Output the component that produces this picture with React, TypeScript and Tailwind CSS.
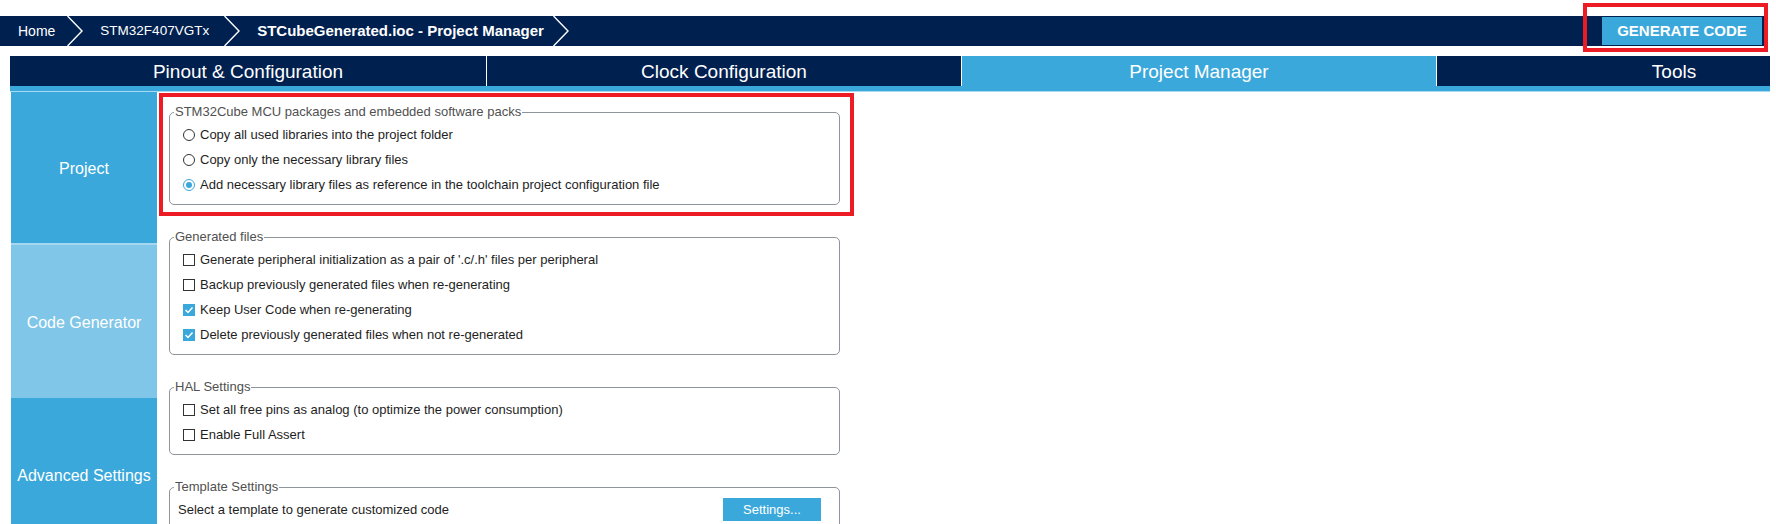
import React from 'react';

const Chevron: React.FC<{ className?: string }> = ({ className }) => (
  <svg className={className} width="16" height="30" viewBox="0 0 16 30" fill="none">
    <polyline points="0.5,0 15,15 0.5,30" stroke="#ffffff" strokeWidth="1.4" />
  </svg>
);

const Radio: React.FC<{ checked?: boolean }> = ({ checked }) =>
  checked ? (
    <span className="flex h-[12px] w-[12px] items-center justify-center rounded-full border border-[#3ba8db] bg-white">
      <span className="h-[6px] w-[6px] rounded-full bg-[#3ba8db]" />
    </span>
  ) : (
    <span className="h-[12px] w-[12px] rounded-full border border-[#333333] bg-white" />
  );

const Checkbox: React.FC<{ checked?: boolean }> = ({ checked }) =>
  checked ? (
    <span className="flex h-[12px] w-[12px] items-center justify-center bg-[#3ba8db]">
      <svg width="12" height="12" viewBox="0 0 12 12" fill="none">
        <polyline points="2.5,6 5,8.5 9.5,3.5" stroke="#ffffff" strokeWidth="1.5" />
      </svg>
    </span>
  ) : (
    <span className="h-[12px] w-[12px] border border-[#333333] bg-white" />
  );

const Option: React.FC<{ kind: 'radio' | 'check'; checked?: boolean; label: string }> = ({
  kind,
  checked,
  label
}) => (
  <label className="flex h-[25px] items-center pl-[13px] text-[13px] text-[#1e1e1e]">
    {kind === 'radio' ? <Radio checked={checked} /> : <Checkbox checked={checked} />}
    <span className="ml-[5px]">{label}</span>
  </label>
);

const Group: React.FC<{ title: string; className?: string; children: React.ReactNode }> = ({
  title,
  className = '',
  children
}) => (
  <fieldset className={`w-[671px] rounded-[5px] border border-[#8e949c] pb-[7px] pt-[2px] ${className}`}>
    <legend className="ml-[4px] px-px text-[13px] leading-[16px] text-[#505050]">{title}</legend>
    {children}
  </fieldset>
);

const tabs = [
  { label: 'Pinout & Configuration', width: 'w-[476px]', active: false },
  { label: 'Clock Configuration', width: 'w-[475px]', active: false },
  { label: 'Project Manager', width: 'w-[475px]', active: true },
  { label: 'Tools', width: 'w-[475px]', active: false }
];

export default function App() {
  return (
    <div className="h-[524px] w-[1776px] overflow-hidden bg-white pt-[16px] font-['Liberation_Sans',Arial,sans-serif]">
      {/* breadcrumb bar */}
      <div className="flex h-[30px] w-[1764px] items-center bg-[#00204f] text-white">
        <span className="pl-[18px] pt-px text-[14px]">Home</span>
        <Chevron className="ml-[12px] mr-[17px]" />
        <span className="pt-px text-[13.5px]">STM32F407VGTx</span>
        <Chevron className="ml-[15px] mr-[17px]" />
        <span className="pt-px text-[15px] font-bold">STCubeGenerated.ioc - Project Manager</span>
        <Chevron className="ml-[9px]" />
        <div className="relative ml-auto mr-[2px]">
          <button className="flex h-[28px] w-[160px] items-center justify-center bg-[#3ba8db] text-[15px] font-bold text-white">
            GENERATE CODE
          </button>
          <span className="pointer-events-none absolute -bottom-[7px] -left-[19px] -right-[6px] -top-[14px] border-4 border-[#ed1c24]" />
        </div>
      </div>

      {/* main tabs */}
      <div className="ml-[10px] mt-[10px] w-[1760px] overflow-hidden">
        <div className="flex h-[30px]">
          {tabs.map((t, i) => (
            <div
              key={t.label}
              className={`flex ${t.width} shrink-0 items-center justify-center pt-[3px] text-[19px] text-white ${
                t.active ? 'bg-[#3ba8db]' : 'bg-[#00204f]'
              } ${i > 0 ? 'border-l border-white' : ''}`}
            >
              {t.label}
            </div>
          ))}
        </div>
        <div className="h-[6px] border-b border-[#a8daf1] bg-[#3ba8db]" />
      </div>

      <div className="ml-[10px] flex">
        {/* side menu */}
        <div className="ml-px flex w-[146px] flex-col text-[16px] text-white">
          <div className="flex h-[151px] items-center justify-center bg-[#3ba8db] pt-[3px]">Project</div>
          <div className="h-[2px] bg-[#a5d7f0]" />
          <div className="flex h-[153px] items-center justify-center bg-[#80c6e9] pt-[2px]">Code Generator</div>
          <div className="flex h-[153px] items-center justify-center bg-[#3ba8db] pt-[2px]">Advanced Settings</div>
        </div>

        {/* settings */}
        <div className="pl-[12px] pt-[12px]">
          <div className="relative">
            <Group title="STM32Cube MCU packages and embedded software packs">
              <Option kind="radio" label="Copy all used libraries into the project folder" />
              <Option kind="radio" label="Copy only the necessary library files" />
              <Option
                kind="radio"
                checked
                label="Add necessary library files as reference in the toolchain project configuration file"
              />
            </Group>
            <span className="pointer-events-none absolute -bottom-[11px] -left-[10px] -right-[14px] -top-[11px] border-4 border-[#ed1c24]" />
          </div>

          <Group title="Generated files" className="mt-[24px]">
            <Option kind="check" label="Generate peripheral initialization as a pair of '.c/.h' files per peripheral" />
            <Option kind="check" label="Backup previously generated files when re-generating" />
            <Option kind="check" checked label="Keep User Code when re-generating" />
            <Option kind="check" checked label="Delete previously generated files when not re-generated" />
          </Group>

          <Group title="HAL Settings" className="mt-[24px]">
            <Option kind="check" label="Set all free pins as analog (to optimize the power consumption)" />
            <Option kind="check" label="Enable Full Assert" />
          </Group>

          <Group title="Template Settings" className="mt-[24px]">
            <div className="flex h-[25px] items-center pl-[8px] pr-[18px] text-[13px] text-[#1e1e1e]">
              <span>Select a template to generate customized code</span>
              <button className="ml-auto flex h-[23px] w-[98px] items-center justify-center bg-[#3ba8db] text-[13px] text-white">
                Settings...
              </button>
            </div>
            <div className="h-[40px]" />
          </Group>
        </div>
      </div>
    </div>
  );
}
